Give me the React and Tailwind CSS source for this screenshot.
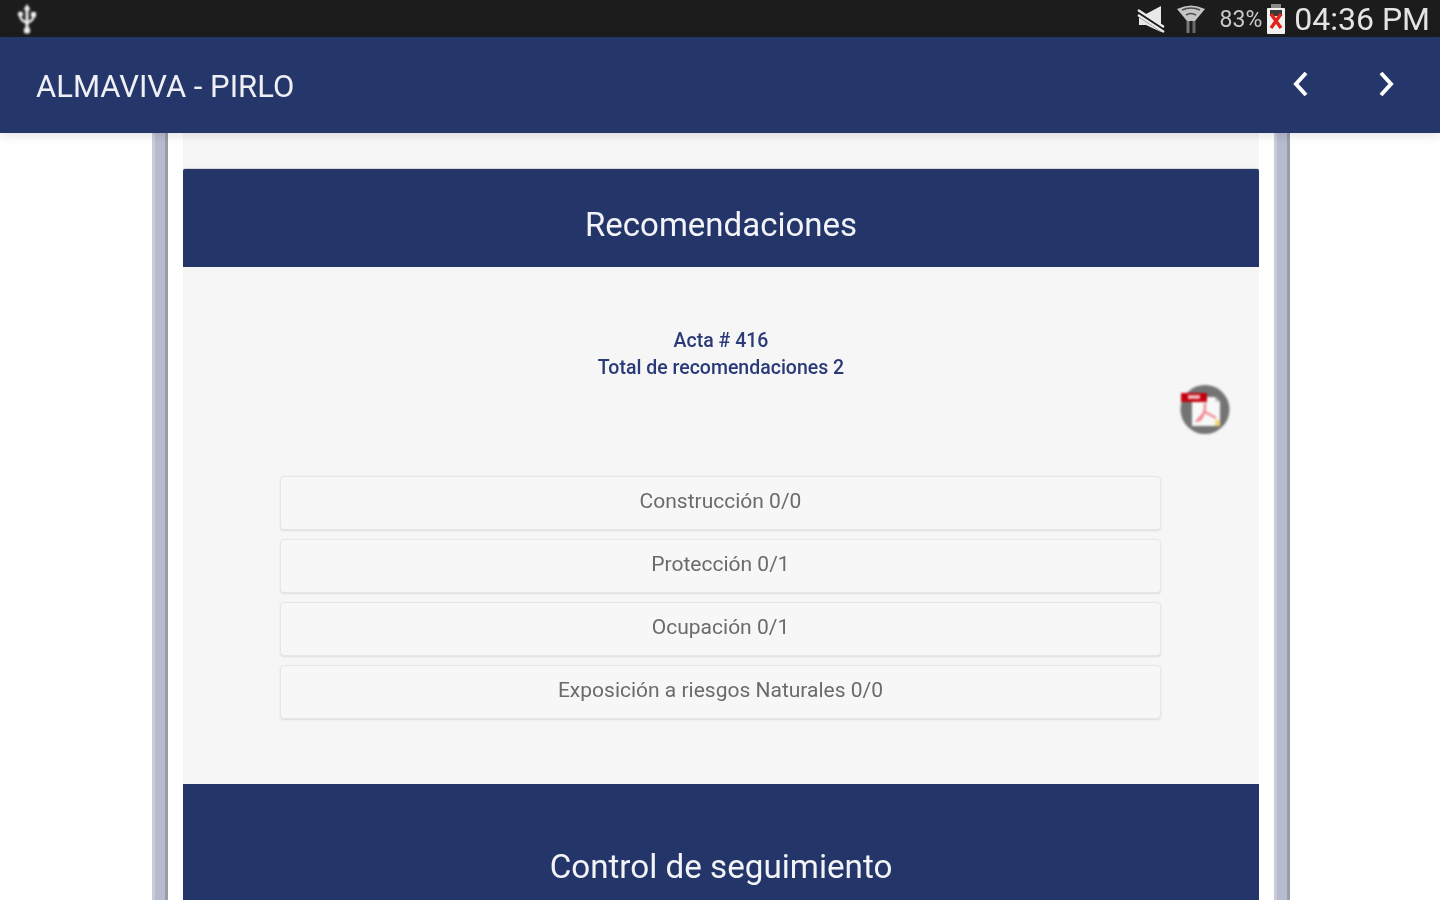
const ROWS = ["Construcción 0/0", "Protección 0/1", "Ocupación 0/1", "Exposición a riesgos Naturales 0/0"];

const UsbIcon = () => (
  <svg width="20" height="30" viewBox="0 0 20 30" fill="none" className="blur-[0.8px]">
    <path d="M10 2 L10 25" stroke="#f2f2f2" strokeWidth="3" />
    <path d="M10 0 L6.5 6 H13.5 Z" fill="#f2f2f2" />
    <circle cx="10" cy="26.5" r="3.2" fill="#f2f2f2" />
    <path d="M3.5 10 V13 Q3.5 16 10 19 Q16.5 16 16.5 13 V10.5" stroke="#f2f2f2" strokeWidth="2.4" />
    <circle cx="3.5" cy="10" r="2.6" fill="#f2f2f2" />
    <rect x="14" y="8" width="5" height="5" fill="#f2f2f2" />
  </svg>
);

const MuteIcon = () => (
  <svg width="28" height="28" viewBox="0 0 28 28" fill="none" className="blur-[0.6px]">
    <path d="M2 9 H9 L24 1 V27 L9 20 H2 Z" fill="#e8e8e8" />
    <path d="M1 8 L27 25" stroke="#1c1c1c" strokeWidth="6" />
    <path d="M1 5 L27 22 M1 10 L27 27" stroke="#ececec" strokeWidth="2.2" />
  </svg>
);

const WifiIcon = () => (
  <svg width="30" height="30" viewBox="0 0 30 30" fill="none" className="blur-[0.7px]">
    <path d="M1 5 Q15 -2 29 5 L19 17 H11 Z" fill="#c4c4c4" />
    <path d="M6 6 Q15 2 24 6 M10 11 Q15 8 20 11" stroke="#4a4a4a" strokeWidth="1.6" />
    <path d="M12 17 V29" stroke="#777777" strokeWidth="3" />
    <path d="M18 17 V29" stroke="#6a6a6a" strokeWidth="3" />
  </svg>
);

const BatteryIcon = () => (
  <svg width="20" height="30" viewBox="0 0 20 30" className="blur-[0.6px]">
    <rect x="5" y="0" width="10" height="4" fill="#8a8a8a" />
    <rect x="1" y="4" width="18" height="26" rx="1" fill="#f2f2f2" />
    <rect x="4" y="6" width="12" height="6" fill="#3a3a3a" />
    <path d="M5 10 L15 24 M15 10 L5 24" stroke="#e2231a" strokeWidth="3.4" />
  </svg>
);

const Chevron = ({ points }) => (
  <svg width="20" height="28" viewBox="0 0 20 28" fill="none" className="blur-[0.4px]">
    <polyline points={points} stroke="#ffffff" strokeWidth="4" />
  </svg>
);

const PdfIcon = () => (
  <svg width="54" height="50" viewBox="0 0 54 50" className="blur-[0.8px]">
    <circle cx="27" cy="24.5" r="24.5" fill="#747474" />
    <path d="M14 12 H37 L42 17 V41 H14 Z" fill="#f8f8f8" />
    <path d="M37 12 L42 17 H37 Z" fill="#cfcfcf" />
    <rect x="3" y="8" width="26" height="9" fill="#c4000f" />
    <rect x="10" y="10" width="12" height="4" fill="#f3b6b6" />
    <path d="M27 18 Q28 28 21 36 M27 27 L38 33 M27 27 L18 37" stroke="#f08a90" strokeWidth="2.4" fill="none" />
    <rect x="37" y="35" width="5" height="6" fill="#f4d77a" />
  </svg>
);

const Rail = () => (
  <div className="w-[16px] bg-[#b6bbd0] border-l-[3px] border-l-[#c9ccd8] border-r-[3px] border-r-[#9a9ca8]" />
);

export default function App() {
  return (
    <div className="h-[900px] w-[1440px] overflow-hidden bg-white flex flex-col font-['Roboto',sans-serif]">
      <div className="h-[37px] shrink-0 bg-[#1c1c1c] flex items-center pl-[17px] pr-[10px] text-[#e4e4e4]">
        <UsbIcon />
        <div className="ml-auto flex items-center">
          <MuteIcon />
          <div className="ml-[11px]"><WifiIcon /></div>
          <span className="ml-[14px] mt-[4px] text-[23px] text-[#c8c8c8] blur-[0.6px]">83%</span>
          <div className="ml-[4px]"><BatteryIcon /></div>
          <span className="ml-[8px] text-[32px] leading-none blur-[0.6px]">04:36 PM</span>
        </div>
      </div>

      <header className="h-[96px] shrink-0 bg-[#25366a] flex items-center pl-[36px] pr-[44px] shadow-[0_2px_10px_rgba(0,0,0,0.12)] relative z-10">
        <h1 className="text-[31px] mt-[5px] text-[#eef0f6] blur-[0.6px]">ALMAVIVA - PIRLO</h1>
        <div className="ml-auto flex items-center gap-[65px] -mt-[3px]">
          <Chevron points="15,3 5,14 15,25" />
          <Chevron points="5,3 15,14 5,25" />
        </div>
      </header>

      <main className="flex-1 flex pl-[152px] pr-[150px] min-h-0">
        <Rail />
        <div className="flex-1 px-[15px] min-w-0">
          <div className="h-full bg-[#f6f6f6] pt-[36px] flex flex-col">
            <div className="h-[98px] bg-[#24356a] rounded-t-[2px] shadow-[0_-1px_1px_rgba(0,0,0,0.15)] flex items-center justify-center pt-[13px] text-[33px] text-[#f2f4f8] blur-[0.5px]">
              Recomendaciones
            </div>

            <div className="h-[517px] pt-[60px]">
              <div className="text-center text-[19.5px] leading-[27px] font-medium text-[#2a3a78] blur-[0.5px]">
                <p>Acta # 416</p>
                <p>Total de recomendaciones 2</p>
              </div>
              <div className="mt-[4px] flex justify-end pr-[27px]">
                <PdfIcon />
              </div>
              <div className="mt-[41px] ml-[97px] mr-[98px] flex flex-col gap-[9px]">
                {ROWS.map((label) => (
                  <div
                    key={label}
                    className="h-[54px] rounded-[4px] border border-[#e6e6e6] bg-[#f7f7f7] shadow-[0_1px_2px_rgba(0,0,0,0.1)] flex justify-center pt-[10px] text-[21px] leading-[28px] text-[#6b6b6b] blur-[0.5px]"
                  >
                    {label}
                  </div>
                ))}
              </div>
            </div>

            <div className="flex-1 bg-[#24356a] flex justify-center pt-[61px] text-[33.2px] leading-[44px] text-[#f2f4f8] blur-[0.5px]">
              Control de seguimiento
            </div>
          </div>
        </div>
        <Rail />
      </main>
    </div>
  );
}
